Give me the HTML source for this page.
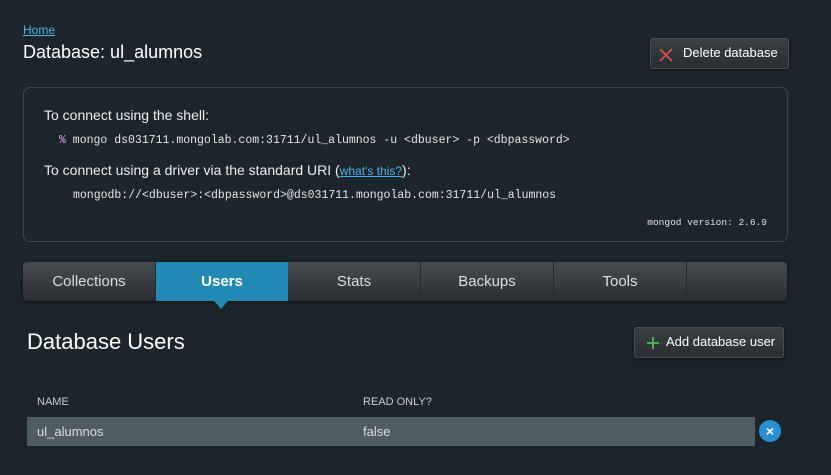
<!DOCTYPE html>
<html><head><style>
body{margin:0;width:831px;height:475px;background:#1c252c;font-family:"Liberation Sans",sans-serif;color:#fff;position:relative;overflow:hidden}
.a{position:absolute;white-space:nowrap}
.mono{font-family:"Liberation Mono",monospace;font-size:11.5px;color:#e4e4e4}
.btn{position:absolute;background:linear-gradient(#3a3f43,#2a2e31);border:1px solid #4a4f53;border-radius:3px;box-shadow:0 1px 3px rgba(0,0,0,.6);font-size:13px;color:#fff}
.tabs{position:absolute;left:23px;top:262px;width:764px;height:39px;border-radius:4px;background:linear-gradient(#474c51,#2a2e32);box-shadow:0 1px 3px rgba(0,0,0,.6);overflow:hidden}
.tab{position:absolute;top:0;height:39px;width:132px;border-right:1px solid #23282c;text-align:center;line-height:39px;font-size:15px;color:#ddd}
</style></head><body>
<div class="a" style="left:23px;top:23px;font-size:12px;color:#4fb3e8;text-decoration:underline">Home</div>
<div class="a" style="left:23px;top:42px;font-size:18px">Database: ul_alumnos</div>
<div class="btn" style="left:650px;top:38px;width:137px;height:29px">
<svg class="a" style="left:8px;top:9px" width="14" height="14"><path d="M1 1L13 13M13 1L1 13" stroke="#d9534f" stroke-width="1.6"/></svg>
<span class="a" style="left:32px;top:6px">Delete database</span></div>
<div class="a" style="left:23px;top:87px;width:763px;height:153px;border:1px solid #3c464e;border-radius:7px"></div>
<div class="a" style="left:44px;top:107px;font-size:14px;color:#eee">To connect using the shell:</div>
<div class="a mono" style="left:59px;top:134px"><b style="color:#c78ee0">%</b> mongo ds031711.mongolab.com:31711/ul_alumnos -u &lt;dbuser&gt; -p &lt;dbpassword&gt;</div>
<div class="a" style="left:44px;top:162px;font-size:14px;color:#eee">To connect using a driver via the standard URI (<span style="color:#4fb3e8;text-decoration:underline;font-size:12px">what's this?</span>):</div>
<div class="a mono" style="left:73px;top:189px">mongodb://&lt;dbuser&gt;:&lt;dbpassword&gt;@ds031711.mongolab.com:31711/ul_alumnos</div>
<div class="a mono" style="right:64px;top:217px;font-size:9.5px">mongod version: 2.6.9</div>
<div class="tabs">
<div class="tab" style="left:0">Collections</div>
<div class="tab" style="left:133px;background:#2389b5;color:#fff;font-weight:bold;border:none">Users</div>
<div class="tab" style="left:265px">Stats</div>
<div class="tab" style="left:398px">Backups</div>
<div class="tab" style="left:531px">Tools</div>
</div>
<div class="a" style="left:214px;top:301px;width:0;height:0;border-left:7px solid transparent;border-right:7px solid transparent;border-top:8px solid #2389b5"></div>
<div class="a" style="left:27px;top:329px;font-size:22px">Database Users</div>
<div class="btn" style="left:634px;top:327px;width:148px;height:29px">
<svg class="a" style="left:11px;top:8px" width="14" height="14"><path d="M7 1V13M1 7H13" stroke="#4cae4c" stroke-width="2"/></svg>
<span class="a" style="left:31px;top:6px">Add database user</span></div>
<div class="a" style="left:37px;top:396px;font-size:11px;color:#ccc">NAME</div>
<div class="a" style="left:363px;top:396px;font-size:11px;color:#ccc">READ ONLY?</div>
<div class="a" style="left:27px;top:417px;width:728px;height:29px;background:#505c64"></div>
<div class="a" style="left:37px;top:424px;font-size:13px;color:#ddd">ul_alumnos</div>
<div class="a" style="left:363px;top:424px;font-size:13px;color:#ddd">false</div>
<div class="a" style="left:759px;top:420px;width:22px;height:22px;border-radius:50%;background:#2a8fd0;text-align:center;line-height:22px;font-weight:bold;font-size:14px">×</div>
</body></html>
